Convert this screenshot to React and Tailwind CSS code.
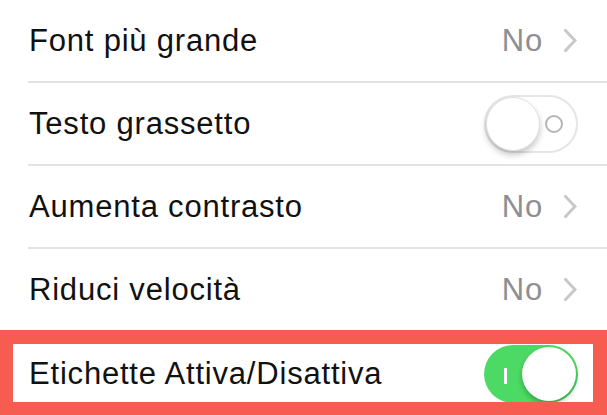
const Chevron = () => (
  <svg width="13" height="23" viewBox="0 0 13 23" className="shrink-0">
    <path d="M1.5 1.5 L11 11.5 L1.5 21.5" fill="none" stroke="#c7c7cc" strokeWidth="3" strokeLinecap="square" />
  </svg>
);

const SwitchOff = () => (
  <div className="relative h-[58px] w-[94px] shrink-0 rounded-full border-2 border-[#e5e5ea] bg-white">
    <div className="absolute right-[13px] top-[18px] h-[18px] w-[18px] rounded-full border-[2.5px] border-[#b5b5b5]" />
    <div className="absolute left-0 top-0 h-[54px] w-[54px] rounded-full border border-[#e0e0e0] bg-white shadow-[0_4px_6px_rgba(0,0,0,0.22)]" />
  </div>
);

const SwitchOn = () => (
  <div className="relative h-[58px] w-[94px] shrink-0 rounded-full bg-[#4cd964]">
    <div className="absolute left-[20px] top-[23px] h-[16px] w-[3px] bg-white" />
    <div className="absolute right-[2px] top-[2px] h-[54px] w-[54px] rounded-full bg-white shadow-[0_3px_5px_rgba(0,0,0,0.25)]" />
  </div>
);

const Row = ({ label, children }) => (
  <div className="flex h-[81px] items-center pl-[29px] pr-[29px]">
    <span className="flex-1 text-[31px] leading-none tracking-[0.8px] text-[#111]">{label}</span>
    {children}
  </div>
);

const Separator = () => <div className="ml-[28px] h-[2px] bg-[#e3e3e6]" />;

const Value = ({ text }) => (
  <div className="flex items-center gap-[21px] pr-[1px]">
    <span className="text-[31px] leading-none tracking-[0.8px] text-[#8e8e93]">{text}</span>
    <Chevron />
  </div>
);

export default function App() {
  return (
    <div className="relative h-[415px] w-[607px] overflow-hidden bg-white font-['Liberation_Sans',Arial,sans-serif]">
      <Row label="Font più grande">
        <Value text="No" />
      </Row>
      <Separator />
      <Row label="Testo grassetto">
        <SwitchOff />
      </Row>
      <Separator />
      <Row label="Aumenta contrasto">
        <Value text="No" />
      </Row>
      <Separator />
      <Row label="Riduci velocità">
        <Value text="No" />
      </Row>
      <Separator />
      <div className="relative pt-[1px]">
        <Row label="Etichette Attiva/Disattiva">
          <SwitchOn />
        </Row>
        <div className="pointer-events-none absolute left-0 right-0 top-[-2px] h-[86px] border-[14px] border-l-[13px] border-[#f65c50]" />
      </div>
    </div>
  );
}
